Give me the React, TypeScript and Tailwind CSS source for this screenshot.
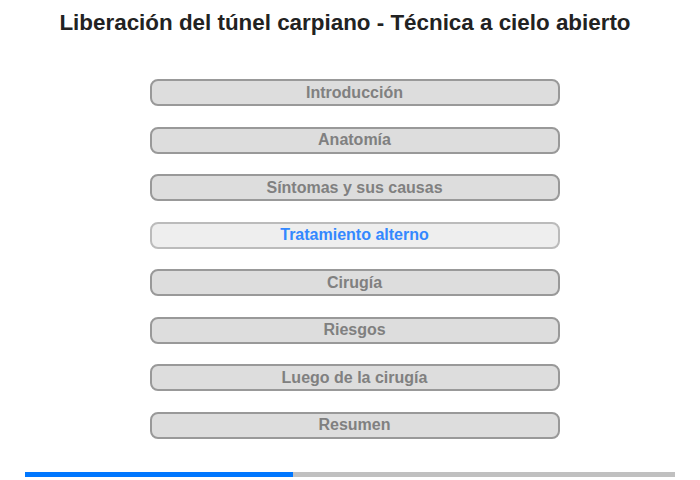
const sections = [
  "Introducción",
  "Anatomía",
  "Síntomas y sus causas",
  "Tratamiento alterno",
  "Cirugía",
  "Riesgos",
  "Luego de la cirugía",
  "Resumen",
];

const active = 3;

export default function App() {
  return (
    <div className="w-[700px] h-[480px] bg-white font-['Liberation_Sans',Arial,sans-serif] flex flex-col">
      <h1 className="pt-[10px] pr-[10px] text-center text-[22.4px] leading-[26px] font-bold text-[#222]">
        Liberación del túnel carpiano - Técnica a cielo abierto
      </h1>

      <div className="mt-[43px] flex flex-col items-center gap-[20.5px] pl-[9px]">
        {sections.map((s, i) => (
          <button
            key={s}
            className={
              i === active
                ? "w-[410px] h-[27px] rounded-[8px] border-2 border-[#bbbbbb] bg-[#eeeeee] text-[16px] font-bold text-[#3388ff] leading-none"
                : "w-[410px] h-[27px] rounded-[8px] border-2 border-[#999999] bg-[#dddddd] text-[16px] font-bold text-[#808080] leading-none"
            }
          >
            {s}
          </button>
        ))}
      </div>

      {/* progress */}
      <div className="mt-auto mb-[3px] mx-[25px] h-[5px] bg-[#c0c0c0] flex">
        <div className="w-[268px] bg-[#0077ff]" />
      </div>
    </div>
  );
}
